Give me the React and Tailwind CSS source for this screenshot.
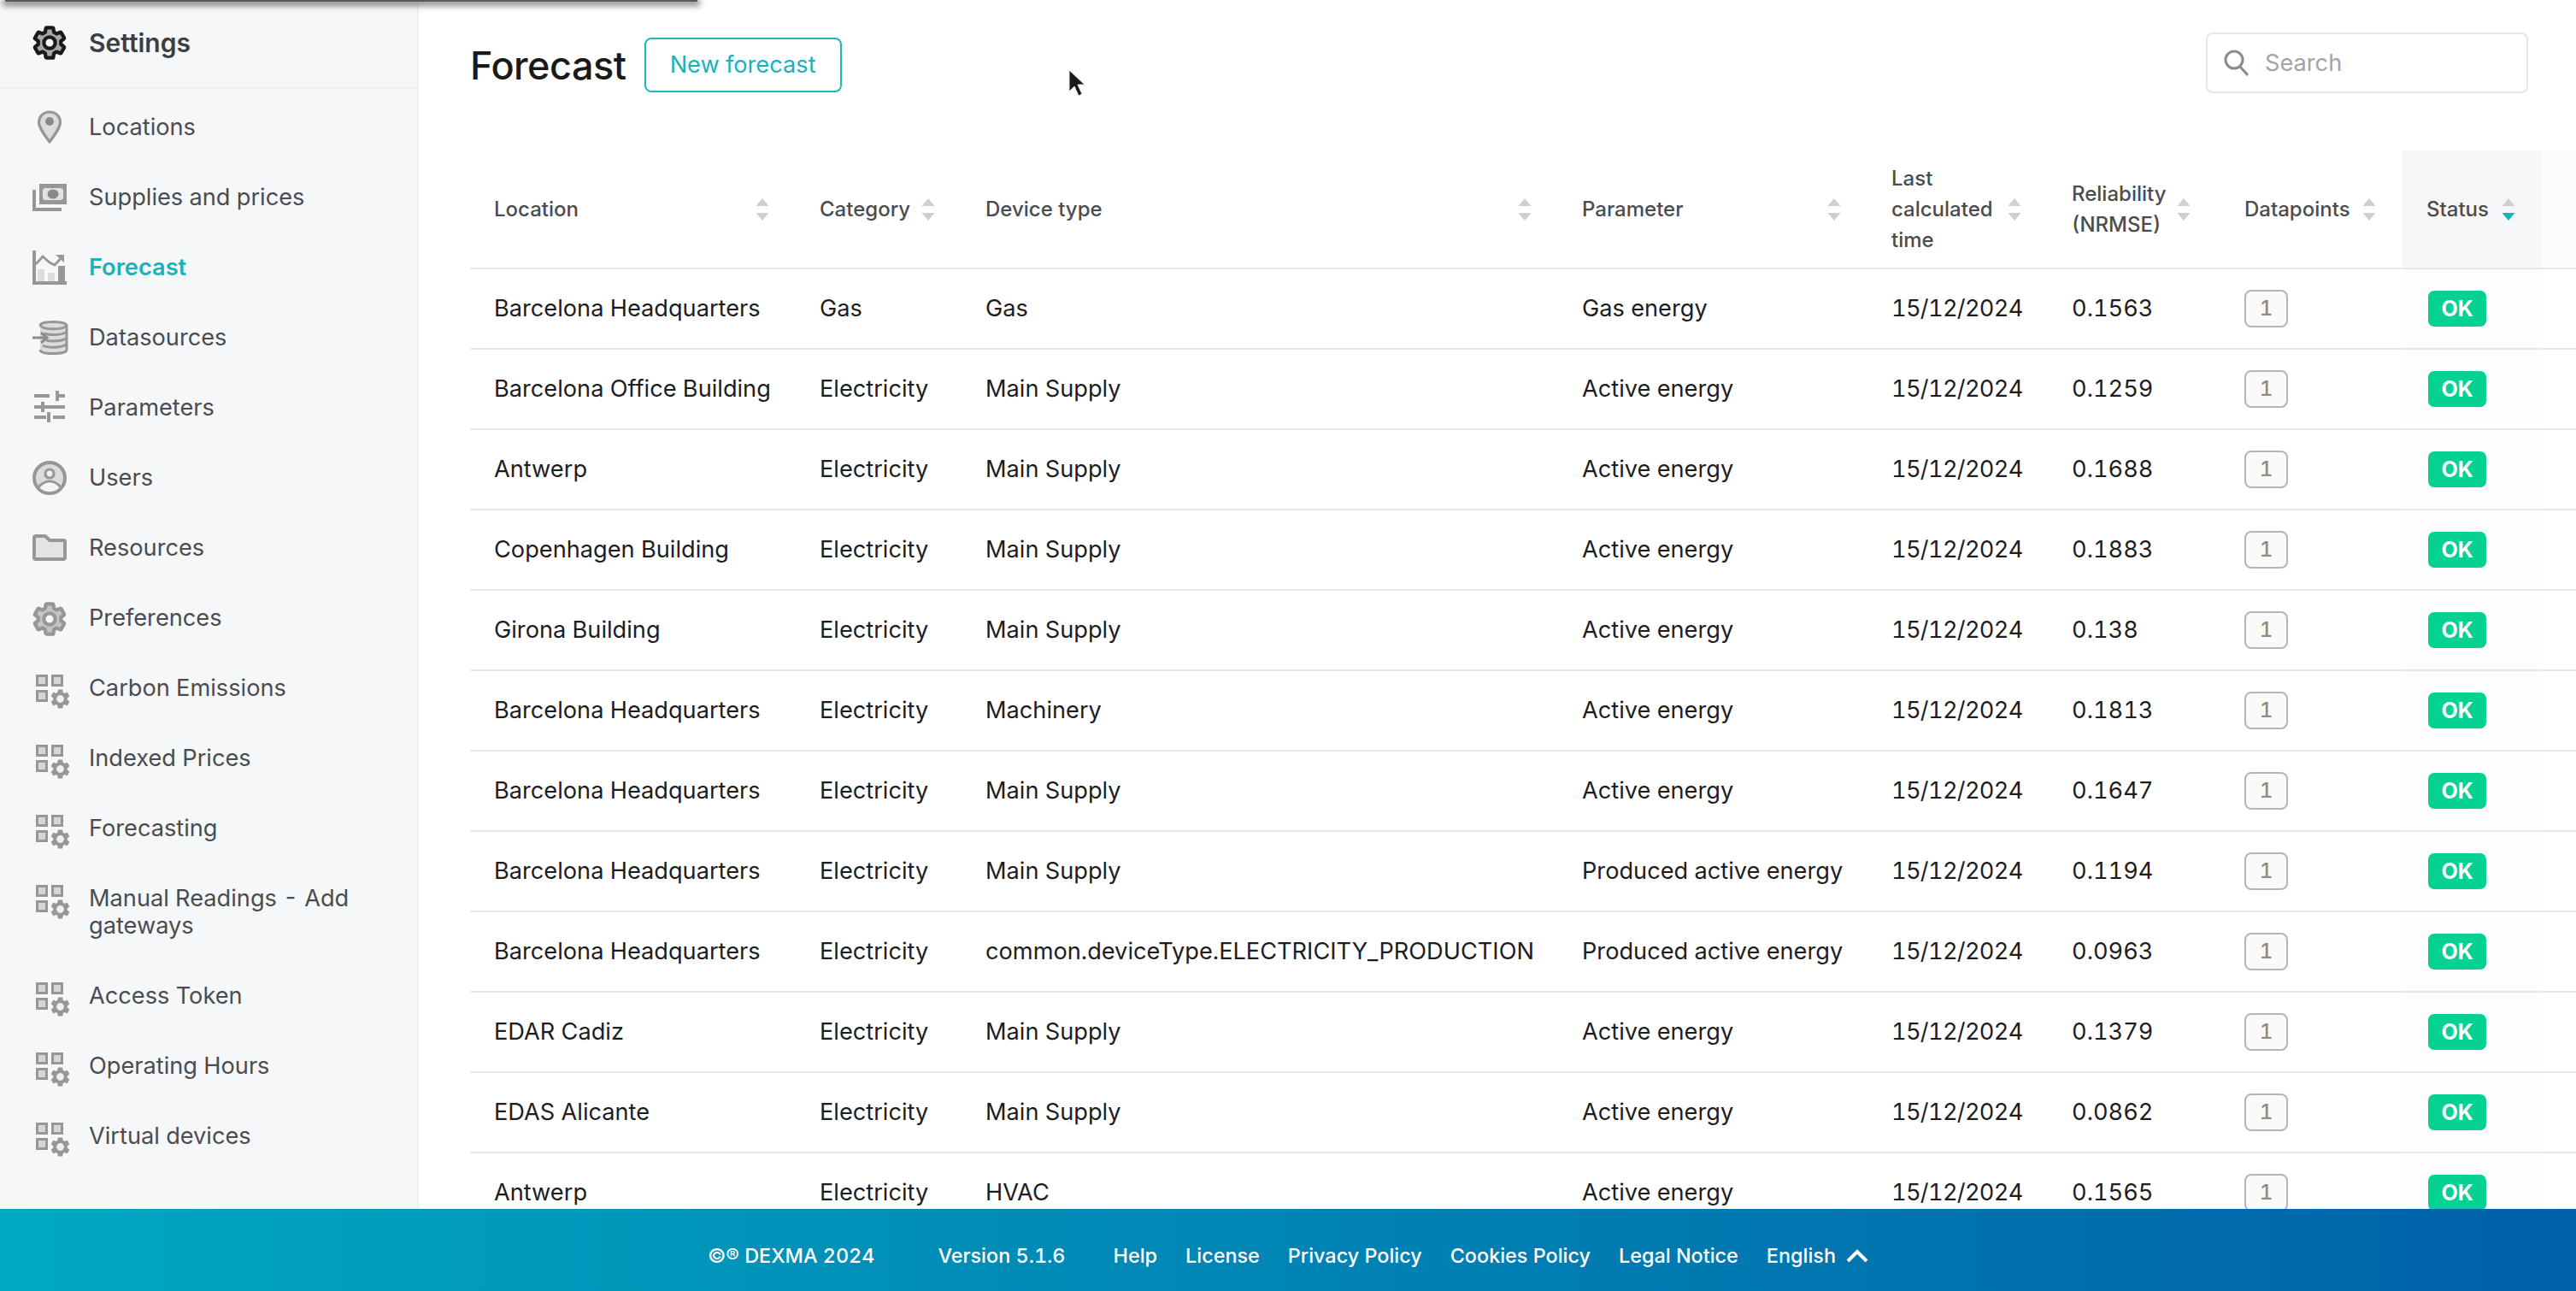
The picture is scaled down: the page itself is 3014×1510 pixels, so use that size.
import React from "react";

const GEAR = "M19.14 12.94c.04-.3.06-.61.06-.94 0-.32-.02-.64-.07-.94l2.03-1.58c.18-.14.23-.41.12-.61l-1.92-3.32c-.12-.22-.37-.29-.59-.22l-2.39.96c-.5-.38-1.03-.7-1.62-.94l-.36-2.54c-.04-.24-.24-.41-.48-.41h-3.84c-.24 0-.43.17-.47.41l-.36 2.54c-.59.24-1.13.57-1.62.94l-2.39-.96c-.22-.08-.47 0-.59.22L2.74 8.87c-.12.21-.08.47.12.61l2.03 1.58c-.05.3-.09.63-.09.94s.02.64.07.94l-2.03 1.58c-.18.14-.23.41-.12.61l1.92 3.32c.12.22.37.29.59.22l2.39-.96c.5.38 1.03.7 1.62.94l.36 2.54c.05.24.24.41.48.41h3.84c.24 0 .44-.17.47-.41l.36-2.54c.59-.24 1.13-.56 1.62-.94l2.39.96c.22.08.47 0 .59-.22l1.92-3.32c.12-.22.07-.47-.12-.61l-2.01-1.58zM12 15.6c-1.98 0-3.6-1.62-3.6-3.6s1.62-3.6 3.6-3.6 3.6 1.62 3.6 3.6-1.62 3.6-3.6 3.6z";

const G = "#979797";
const L = "#dcdcdc";

const Box = ({ children }) => (
  <svg width="44" height="44" viewBox="0 0 44 44" className="block overflow-visible">{children}</svg>
);

const GearIcon = ({ stroke = G, fill = "#c4c4c4" }) => (
  <svg width="42" height="42" viewBox="1.2 0.6 21.6 22.8" className="-ml-[1px] block">
    <path d={GEAR} fill={fill} stroke={stroke} strokeWidth="2.3" fillRule="evenodd" strokeLinejoin="round" />
  </svg>
);

const Pin = () => (
  <Box>
    <path d="M20 2C12.5 2 7.5 7.5 7.5 14c0 6 6 14 12.5 23 6.5-9 12.5-17 12.5-23C32.5 7.5 27.5 2 20 2z" fill={L} stroke={G} strokeWidth="3.2" strokeLinejoin="round" />
    <circle cx="20" cy="13" r="5" fill="#8a8a8a" />
  </Box>
);

const Money = () => (
  <Box>
    <path d="M2 11v23h32" fill="none" stroke={G} strokeWidth="4" />
    <rect x="8" y="4" width="32" height="24" fill={G} />
    <path d="M14 9h20l2 2v10l-2 2H14l-2-2V11z" fill="#e2e2e2" />
    <ellipse cx="24" cy="16" rx="6.5" ry="5.5" fill="#8a8a8a" />
  </Box>
);

const Chart = () => (
  <Box>
    <path d="M2 0v38h38" fill="none" stroke={G} strokeWidth="4" />
    <rect x="6" y="22" width="8" height="14" fill="#dcdcdc" />
    <rect x="18" y="26" width="8" height="10" fill="#dcdcdc" />
    <rect x="30" y="18" width="8" height="18" fill={G} />
    <path d="M4 16l8-9 8 7 6 3 10-11" fill="none" stroke={G} strokeWidth="2.8" />
    <path d="M27 5h10v9z" fill={G} />
  </Box>
);

const Db = () => (
  <Box>
    <path d="M9 6c0-3 6-4.5 15-4.5S40 3 40 6v28c0 3-7 4.5-16 4.5S9 37 9 34" fill={L} stroke="none" />
    <path d="M9 6c0-3 6-4.5 15-4.5S40 3 40 6v28c0 3-7 4.5-16 4.5S9 37 9 34" fill="none" stroke={G} strokeWidth="3" />
    <path d="M9 6c3 3 8 3.8 15 3.8S37 9 40 6M14 15c3 1 6 1.6 10 1.6s12-.6 16-3.5M16 23c3 .8 5 1 8 1 6 0 12-1 16-3.5M12 29c3 1.6 7 2.2 12 2.2s12-1 16-3.4" fill="none" stroke={G} strokeWidth="3" />
    <path d="M0 20h14" stroke="#8a8a8a" strokeWidth="3" />
    <path d="M10 14l7 6-7 6" fill="none" stroke="#8a8a8a" strokeWidth="3" />
  </Box>
);

const Sliders = () => (
  <Box>
    <g stroke={G} strokeWidth="4" fill="none">
      <path d="M2 6h18M27 6h11M29 0v12" />
      <path d="M2 19h8M14 19h24M12 13v12" />
      <path d="M2 31h14M24 31h14M19 25v12" />
    </g>
  </Box>
);

const User = () => (
  <Box>
    <circle cx="20" cy="20" r="18" fill={L} stroke={G} strokeWidth="4" />
    <circle cx="20" cy="15" r="5" fill="#f0f0f0" stroke={G} strokeWidth="3.2" />
    <path d="M7 31c4-5 9-7 13-7s9 2 13 7" fill="none" stroke={G} strokeWidth="3.2" />
    <path d="M8.5 31.5c4-4.5 8-6 11.5-6s7.5 1.5 11.5 6c-3 3-7 4.5-11.5 4.5s-8.5-1.5-11.5-4.5z" fill="#f4f5f8" />
  </Box>
);

const Folder = () => (
  <Box>
    <path d="M4 6h11l5 5h16a2 2 0 0 1 2 2v18a2 2 0 0 1-2 2H4a2 2 0 0 1-2-2V8a2 2 0 0 1 2-2z" fill="#e2e3e3" stroke={G} strokeWidth="4" strokeLinejoin="round" />
  </Box>
);

const Widgets = () => (
  <svg width="44" height="44" viewBox="0 0 44 44" className="block overflow-visible">
    <rect x="5.5" y="5.5" width="11" height="11" fill="#d6d6d6" stroke={G} strokeWidth="3" />
    <rect x="23.5" y="5.5" width="11" height="11" fill="#d6d6d6" stroke={G} strokeWidth="3" />
    <rect x="5.5" y="23.5" width="11" height="11" fill="#d6d6d6" stroke={G} strokeWidth="3" />
    <svg x="21" y="21" width="23" height="23" viewBox="2 2 20 20">
      <path d={GEAR} fill={G} fillRule="evenodd" />
      <circle cx="12" cy="12" r="3.6" fill="#f0f0f0" />
    </svg>
  </svg>
);

const nav = [
  ["Locations", Pin],
  ["Supplies and prices", Money],
  ["Forecast", Chart, true],
  ["Datasources", Db],
  ["Parameters", Sliders],
  ["Users", User],
  ["Resources", Folder],
  ["Preferences", () => <GearIcon />],
  ["Carbon Emissions", Widgets],
  ["Indexed Prices", Widgets],
  ["Forecasting", Widgets],
  ["Manual Readings - Add gateways", Widgets],
  ["Access Token", Widgets],
  ["Operating Hours", Widgets],
  ["Virtual devices", Widgets],
];

const rows = [
  ["Barcelona Headquarters", "Gas", "Gas", "Gas energy", "0.1563"],
  ["Barcelona Office Building", "Electricity", "Main Supply", "Active energy", "0.1259"],
  ["Antwerp", "Electricity", "Main Supply", "Active energy", "0.1688"],
  ["Copenhagen Building", "Electricity", "Main Supply", "Active energy", "0.1883"],
  ["Girona Building", "Electricity", "Main Supply", "Active energy", "0.138"],
  ["Barcelona Headquarters", "Electricity", "Machinery", "Active energy", "0.1813"],
  ["Barcelona Headquarters", "Electricity", "Main Supply", "Active energy", "0.1647"],
  ["Barcelona Headquarters", "Electricity", "Main Supply", "Produced active energy", "0.1194"],
  ["Barcelona Headquarters", "Electricity", "common.deviceType.ELECTRICITY_PRODUCTION", "Produced active energy", "0.0963"],
  ["EDAR Cadiz", "Electricity", "Main Supply", "Active energy", "0.1379"],
  ["EDAS Alicante", "Electricity", "Main Supply", "Active energy", "0.0862"],
  ["Antwerp", "Electricity", "HVAC", "Active energy", "0.1565"],
];

const Sort = ({ active }) => (
  <svg width="16" height="26" viewBox="0 0 16 26" className="block shrink-0">
    <path d="M8 0l7.5 9H.5z" fill="#cfcfcf" />
    <path d="M.5 17h15L8 26z" fill={active ? "#17b3bc" : "#cfcfcf"} />
  </svg>
);

const Th = ({ children, active, className = "" }) => (
  <th className={`p-0 pl-[28px] pr-[31px] text-left font-medium border-b-2 border-[#e8e8e8] ${className}`}>
    <div className="flex items-center justify-between">
      <span className="block">{children}</span>
      <Sort active={active} />
    </div>
  </th>
);

const Td = ({ children, className = "" }) => (
  <td className={`p-0 pb-[1px] pl-[28px] whitespace-nowrap border-b-2 border-[#e8e8e8] ${className}`}>{children}</td>
);

export default function App() {
  return (
    <div
      className="relative flex h-screen w-full flex-col overflow-hidden bg-white text-[27.2px] leading-[32px] tabular-nums"
      style={{ fontFamily: 'Inter, "Liberation Sans", sans-serif' }}
    >
      <div className="flex min-h-0 flex-1">
        <aside className="w-[490px] shrink-0 border-r-2 border-[#eeeff1] bg-[#f6f7f9] text-[#4a4c50]">
          <div className="flex h-[104px] items-center border-b-2 border-[#eeeff1] pb-[2px] pl-[38px]">
            <div className="w-[66px] shrink-0">
              <GearIcon stroke="#1a1a1a" fill="#a8a8a8" />
            </div>
            <span className="text-[30px] font-semibold text-[#3c3e42]">Settings</span>
          </div>
          <nav className="pt-[4px]">
            {nav.map(([label, Icon, active]) => (
              <div key={label} className="flex items-start py-[25px] pl-[38px] pr-[60px]">
                <div className="-mt-[4px] h-[36px] w-[66px] shrink-0">
                  <Icon />
                </div>
                <span className={active ? "font-semibold text-[#17b3bc]" : ""}>{label}</span>
              </div>
            ))}
          </nav>
        </aside>

        <main className="min-w-0 flex-1 overflow-hidden pl-[60px]">
          <div className="flex h-[176px] items-start justify-between pr-[56px] pt-[38px]">
            <div className="flex items-start gap-[21px]">
              <h1 className="mt-[9px] text-[45px] font-medium leading-[60px] tracking-[-0.5px] text-[#1a1a1a]">Forecast</h1>
              <button className="mt-[6px] flex h-[64px] w-[231px] items-center justify-center rounded-[8px] border-2 border-[#1fb6bd] text-[#17b3bc]">
                New forecast
              </button>
            </div>
            <div className="flex h-[71px] w-[377px] items-center rounded-[8px] border-2 border-[#e6e6e6] pl-[18px] text-[#a3a3a3]">
              <svg width="32" height="32" viewBox="0 0 32 32" fill="none" stroke="#8c8c8c" strokeWidth="3" className="mr-[17px] block shrink-0">
                <circle cx="13" cy="12" r="10" />
                <path d="M20 20l9 10" />
              </svg>
              <span>Search</span>
            </div>
          </div>

          <table className="w-full table-fixed border-collapse text-[#1d1d1f]">
            <colgroup>
              <col className="w-[381px]" />
              <col className="w-[194px]" />
              <col className="w-[698px]" />
              <col className="w-[362px]" />
              <col className="w-[211px]" />
              <col className="w-[198px]" />
              <col className="w-[217px]" />
              <col className="w-[163px]" />
              <col />
            </colgroup>
            <thead>
              <tr className="h-[138px] text-[24px] leading-[36px] text-[#4a4c50]">
                <Th>Location</Th>
                <Th>Category</Th>
                <Th>Device type</Th>
                <Th>Parameter</Th>
                <Th>Last calculated time</Th>
                <Th>Reliability (NRMSE)</Th>
                <Th className="!pl-[32px]">Datapoints</Th>
                <Th active className="bg-[#f5f6f7]">Status</Th>
                <th className="border-b-2 border-[#e8e8e8] bg-[#fcfcfc] p-0" />
              </tr>
            </thead>
            <tbody>
              {rows.map((r, i) => (
                <tr key={i} className="h-[94px]">
                  <Td>{r[0]}</Td>
                  <Td>{r[1]}</Td>
                  <Td>{r[2]}</Td>
                  <Td>{r[3]}</Td>
                  <Td className="tracking-[-0.7px]">15/12/2024</Td>
                  <Td>{r[4]}</Td>
                  <Td className="!pl-[32px]">
                    <span className="flex h-[44px] w-[51px] items-center justify-center rounded-[8px] border-2 border-[#b5b5b5] bg-[#fafafa] text-[24px] font-medium text-[#8c8c8c]">
                      1
                    </span>
                  </Td>
                  <Td className="!pl-[30px] bg-[#fdfdfd]">
                    <span className="flex h-[42px] w-[68px] items-center justify-center rounded-[7px] bg-[#05d193] text-[25px] font-bold text-white">
                      OK
                    </span>
                  </Td>
                  <td className="border-b-2 border-[#e8e8e8] p-0" />
                </tr>
              ))}
            </tbody>
          </table>
        </main>
      </div>

      <footer className="flex h-[96px] shrink-0 items-center justify-center gap-[33px] bg-[linear-gradient(90deg,#00a8c1,#0061a9)] pt-[13px] text-[23.4px] font-medium text-white">
        <span className="mr-[41px]">©® DEXMA 2024</span>
        <span className="mr-[23px]">Version 5.1.6</span>
        <span>Help</span>
        <span>License</span>
        <span>Privacy Policy</span>
        <span>Cookies Policy</span>
        <span>Legal Notice</span>
        <span className="flex items-center gap-[12px]">
          English
          <svg width="26" height="16" viewBox="0 0 26 16" fill="none" stroke="white" strokeWidth="4" className="block">
            <path d="M2 14L13 3l11 11" />
          </svg>
        </span>
      </footer>

      <div className="absolute left-[6px] top-0 h-[2px] w-[810px] bg-[#5a5a5a] shadow-[0_2px_7px_3px_rgba(0,0,0,0.45)]" />

      <svg width="24" height="34" viewBox="0 0 24 34" className="absolute left-[1249px] top-[81px]">
        <path d="M2 1v25l6-6 5 11 4-2-5-11h8z" fill="#1a1a1a" stroke="#e8e8e8" strokeWidth="1" />
      </svg>
    </div>
  );
}
